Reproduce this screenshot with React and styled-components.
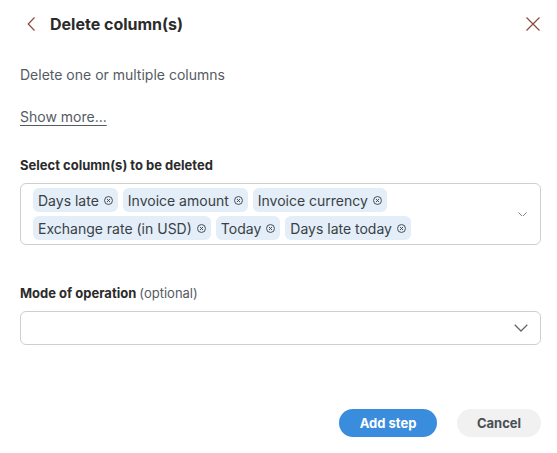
import React from 'react'
import styled, { createGlobalStyle } from 'styled-components'

const GlobalStyle = createGlobalStyle`
  body {
    margin: 0;
    background: #ffffff;
    font-family: Inter, "Noto Sans", sans-serif;
    color: #2b2b2b;
  }
`

const Panel = styled.div`
  width: 557px;
  height: 453px;
  box-sizing: border-box;
  padding: 0 16px 0 20px;
  display: flex;
  flex-direction: column;
`

const Header = styled.div`
  display: flex;
  align-items: center;
  height: 48px;
`

const IconButton = styled.button`
  border: none;
  background: transparent;
  padding: 0;
  display: flex;
  align-items: center;
  justify-content: center;
  cursor: pointer;
`

const Title = styled.h1`
  flex: 1;
  margin: 0 0 0 14px;
  font-size: 16px;
  font-weight: 700;
  color: #2b2b2b;
`

const Description = styled.p`
  margin: 18px 0 0;
  font-size: 14px;
  color: #555b63;
`

const ShowMore = styled.a`
  margin-top: 25px;
  font-size: 14px;
  color: #555b63;
  text-decoration: underline;
  text-underline-offset: 3px;
  align-self: flex-start;
`

const Label = styled.div`
  margin-top: ${p => p.$top}px;
  font-size: 13px;
  font-weight: 700;
  color: #2b2b2b;

  span {
    font-weight: 400;
    color: #555b63;
  }
`

const SelectBox = styled.div`
  margin-top: 10px;
  width: 521px;
  box-sizing: border-box;
  min-height: ${p => p.$height}px;
  border: 1px solid #cfcfcf;
  border-radius: 6px;
  display: flex;
  align-items: center;
  padding: 4px ${p => p.$right}px 4px 12px;
`

const Chips = styled.div`
  flex: 1;
  display: flex;
  flex-wrap: wrap;
  gap: 4px 5px;
`

const Chip = styled.span`
  display: inline-flex;
  align-items: center;
  gap: 5px;
  height: 24px;
  padding: 0 5px;
  border-radius: 6px;
  background: #e3eef9;
  font-size: 14px;
  color: #3a3f45;
`

const Footer = styled.div`
  margin-top: auto;
  margin-bottom: 16px;
  display: flex;
  justify-content: flex-end;
  gap: 20px;
`

const Button = styled.button`
  height: 28px;
  border: none;
  border-radius: 14px;
  padding: 0;
  width: ${p => p.$w}px;
  font-family: Inter, "Noto Sans", sans-serif;
  font-size: 13px;
  font-weight: 700;
  background: ${p => (p.$primary ? '#3a8ddc' : '#f1f1f1')};
  color: ${p => (p.$primary ? '#ffffff' : '#4a4f55')};
`

const Chevron = ({ w }) => (
  <svg width={w} height={w * 0.55} viewBox="0 0 12 6.6" fill="none">
    <path d="M0.6 0.6l5.4 5.4 5.4-5.4" stroke="#666" strokeWidth="1.1" />
  </svg>
)

const RemoveIcon = () => (
  <svg width="9" height="9" viewBox="0 0 10 10" fill="none">
    <circle cx="5" cy="5" r="4.4" stroke="#3a3f45" strokeWidth="1" />
    <path d="M3.3 3.3l3.4 3.4M6.7 3.3l-3.4 3.4" stroke="#3a3f45" strokeWidth="1" />
  </svg>
)

const columns = [
  'Days late',
  'Invoice amount',
  'Invoice currency',
  'Exchange rate (in USD)',
  'Today',
  'Days late today',
]

export default function App() {
  return (
    <>
      <GlobalStyle />
      <Panel>
        <Header>
          <IconButton style={{ marginLeft: 7 }}>
            <svg width="9" height="14" viewBox="0 0 9 14" fill="none">
              <path d="M7.5 0.5L1.2 7l6.3 6.5" stroke="#8a4a3a" strokeWidth="1.2" />
            </svg>
          </IconButton>
          <Title>Delete column(s)</Title>
          <IconButton>
            <svg width="16" height="16" viewBox="0 0 16 16" fill="none">
              <path d="M1.5 1.5l13 13M14.5 1.5l-13 13" stroke="#8a4a3a" strokeWidth="1.2" />
            </svg>
          </IconButton>
        </Header>

        <Description>Delete one or multiple columns</Description>
        <ShowMore>Show more...</ShowMore>

        <Label $top={32}>Select column(s) to be deleted</Label>
        <SelectBox $height={62} $right={13}>
          <Chips>
            {columns.map(c => (
              <Chip key={c}>
                {c}
                <RemoveIcon />
              </Chip>
            ))}
          </Chips>
          <Chevron w={9} />
        </SelectBox>

        <Label $top={40}>
          Mode of operation <span>(optional)</span>
        </Label>
        <SelectBox $height={34} $right={12}>
          <Chips />
          <Chevron w={14} />
        </SelectBox>

        <Footer>
          <Button $primary $w={98}>Add step</Button>
          <Button $w={84}>Cancel</Button>
        </Footer>
      </Panel>
    </>
  )
}
